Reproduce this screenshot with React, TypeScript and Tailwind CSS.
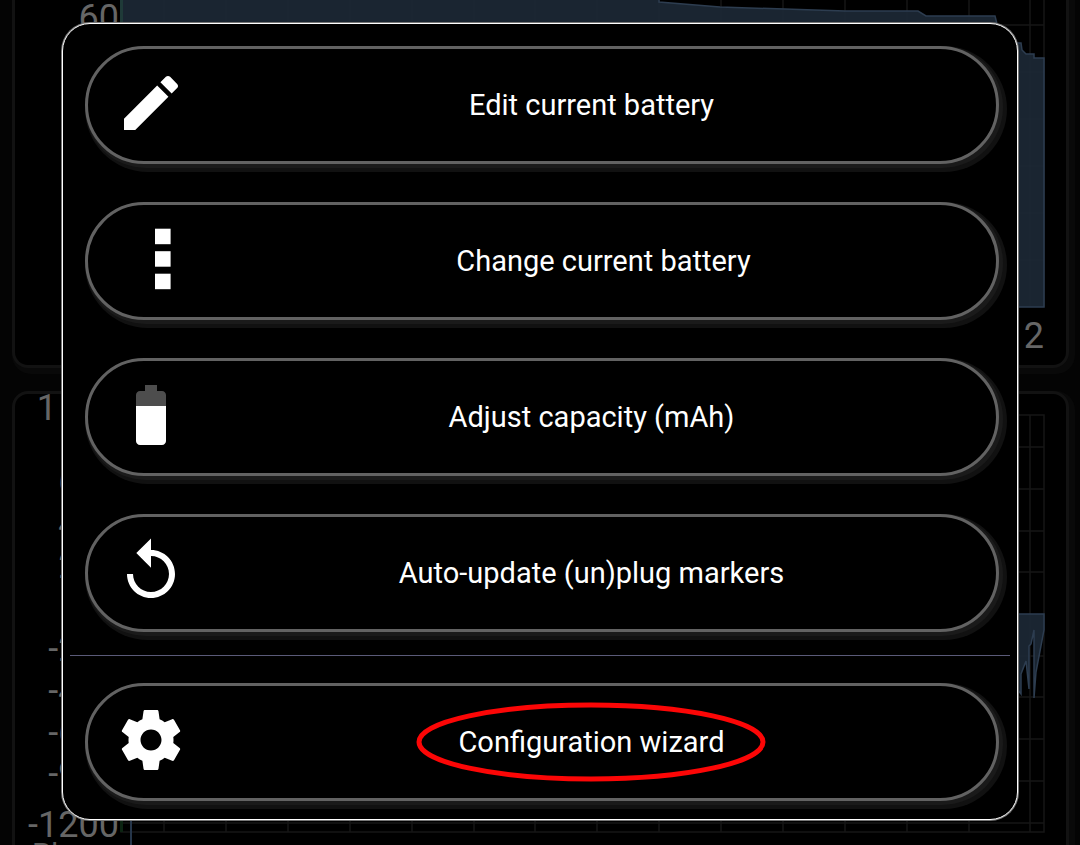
import type { ReactNode } from 'react';

type MenuItem = {
  label: string;
  icon: ReactNode;
  highlighted?: boolean;
};

const VERTICAL_LINES = [
  164, 226, 288, 350, 412, 474, 535, 597, 659, 721, 783, 845, 907, 969, 1030,
];
const LEVEL_LINES = [25, 72, 119, 166, 213, 260];
const CURRENT_LINES = [447, 489, 531, 572, 656, 697, 739, 781, 823];

const CURRENT_LABELS = [
  { text: '600', y: 494 },
  { text: '400', y: 536 },
  { text: '200', y: 578 },
  { text: '0', y: 620 },
  { text: '-200', y: 661 },
  { text: '-400', y: 703 },
  { text: '-600', y: 745 },
  { text: '-900', y: 786 },
  { text: '-1200', y: 837 },
];

function MaterialIcon({ children }: { children: ReactNode }) {
  return (
    <svg className="size-[72px] shrink-0 fill-white" viewBox="0 0 24 24" aria-hidden="true">
      {children}
    </svg>
  );
}

const editIcon = (
  <MaterialIcon>
    <path d="M3 17.25V21h3.75L17.81 9.94l-3.75-3.75L3 17.25zM20.71 7.04c.39-.39.39-1.02 0-1.41l-2.34-2.34c-.39-.39-1.02-.39-1.41 0l-1.83 1.83 3.75 3.75 1.83-1.83z" />
  </MaterialIcon>
);

const moreIcon = (
  <svg className="h-[72px] w-24 shrink-0 fill-white" viewBox="0 0 96 72" aria-hidden="true">
    <rect x="40" y="5.7" width="15.6" height="15.5" />
    <rect x="40" y="28.2" width="15.6" height="15.5" />
    <rect x="40" y="50.7" width="15.6" height="15.5" />
  </svg>
);

const batteryIcon = (
  <MaterialIcon>
    <path
      fillOpacity="0.3"
      d="M17 5.33C17 4.6 16.4 4 15.67 4H14V2h-4v2H8.33C7.6 4 7 4.6 7 5.33V9h10V5.33z"
    />
    <path d="M7 9v11.67C7 21.4 7.6 22 8.33 22h7.33c.74 0 1.34-.6 1.34-1.33V9H7z" />
  </MaterialIcon>
);

const replayIcon = (
  <MaterialIcon>
    <path d="M12 5V1.2L7.1 6l4.9 4.9V7c3.31 0 6 2.69 6 6s-2.69 6-6 6-6-2.69-6-6H4c0 4.42 3.58 8 8 8s8-3.58 8-8-3.58-8-8-8z" />
  </MaterialIcon>
);

const settingsIcon = (
  <MaterialIcon>
    <path d="M19.43 12.98c.04-.32.07-.64.07-.98s-.03-.66-.07-.98l2.11-1.65c.19-.15.24-.42.12-.64l-2-3.46c-.12-.22-.39-.3-.61-.22l-2.49 1c-.52-.4-1.08-.73-1.69-.98l-.38-2.65C14.46 2.18 14.25 2 14 2h-4c-.25 0-.46.18-.49.42l-.38 2.65c-.61.25-1.17.59-1.69.98l-2.49-1c-.23-.09-.49 0-.61.22l-2 3.46c-.13.22-.07.49.12.64l2.11 1.65c-.04.32-.07.65-.07.98s.03.66.07.98l-2.11 1.65c-.19.15-.24.42-.12.64l2 3.46c.12.22.39.3.61.22l2.49-1c.52.4 1.08.73 1.69.98l.38 2.65c.03.24.24.42.49.42h4c.25 0 .46-.18.49-.42l.38-2.65c.61-.25 1.17-.59 1.69-.98l2.49 1c.23.09.49 0 .61-.22l2-3.46c.12-.22.07-.49-.12-.64l-2.11-1.65zM12 15.5c-1.93 0-3.5-1.57-3.5-3.5s1.57-3.5 3.5-3.5 3.5 1.57 3.5 3.5-1.57 3.5-3.5 3.5z" />
  </MaterialIcon>
);

const BATTERY_ITEMS: MenuItem[] = [
  { label: 'Edit current battery', icon: editIcon },
  { label: 'Change current battery', icon: moreIcon },
  { label: 'Adjust capacity (mAh)', icon: batteryIcon },
  { label: 'Auto-update (un)plug markers', icon: replayIcon },
];

function MenuButton({ label, icon, highlighted }: MenuItem) {
  return (
    <button
      type="button"
      className="flex h-[118px] w-full items-center rounded-full border-3 border-[#626262] bg-black pl-[27px] text-white shadow-[2px_2px_0_2px_#1a1a1a,4px_4px_0_4px_#111111]"
    >
      <span className="pb-1">{icon}</span>
      <span className="flex flex-1 justify-center text-[29px] leading-9">
        <span className="relative">
          {label}
          {/* Hand-drawn style marker around the label */}
          {highlighted && (
            <svg
              className="absolute top-1/2 left-1/2 h-20 w-[350px] -translate-1/2"
              viewBox="0 0 350 80"
              aria-hidden="true"
            >
              <ellipse cx="175" cy="40" rx="172" ry="37" fill="none" stroke="#fc0606" strokeWidth="5" />
            </svg>
          )}
        </span>
      </span>
    </button>
  );
}

/** Battery level over time */
function LevelChart() {
  return (
    <svg className="block w-full" viewBox="15 0 1051 365" role="img" aria-label="Battery level">
      <g stroke="#161616" strokeWidth="1.5">
        {VERTICAL_LINES.map((x) => (
          <path key={x} d={`M${x} 0V307`} />
        ))}
        {LEVEL_LINES.map((y) => (
          <path key={y} d={`M121 ${y}H1044`} />
        ))}
        <path d="M1044 0V307" />
      </g>
      <path
        d="M121 0H659V2L720 7L845 11H918L926 16H995L997 24L1010 43H1021L1022 50L1026 54H1034V58H1044V307H121Z"
        fill="#1d2936"
        fillOpacity="0.9"
      />
      <path
        d="M659 0V2L720 7L845 11H918L926 16H995L997 24L1010 43H1021L1022 50L1026 54H1034V58H1044V307H121"
        fill="none"
        stroke="#2d3d50"
        strokeWidth="1.5"
      />
      <path d="M121.5 0V307" stroke="#1f3a38" strokeWidth="3" />
      <g fill="#666666" fontSize="36" textAnchor="end">
        <text x="119" y="30">60</text>
        <text x="1044" y="348">2</text>
      </g>
    </svg>
  );
}

/** Charge and discharge current over time */
function CurrentChart() {
  return (
    <svg className="block w-full" viewBox="15 394 1051 480" role="img" aria-label="Battery current">
      <g fill="none" stroke="#161616" strokeWidth="1.5">
        {VERTICAL_LINES.map((x) => (
          <path key={x} d={`M${x} 415V832`} />
        ))}
        {CURRENT_LINES.map((y) => (
          <path key={y} d={`M121 ${y}H1044`} />
        ))}
        <path d="M121 415H1044V832H121Z" />
      </g>
      <path
        d="M1010 614H1044V630L1036 672L1034 698V630L1031 644L1029 646V689L1026 661L1021 674V694L1018 690H1010Z"
        fill="#1d2936"
        fillOpacity="0.9"
      />
      <path
        d="M1010 614H1044V630L1036 672L1034 698V630L1031 644L1029 646V689L1026 661L1021 674V694L1018 690V614"
        fill="none"
        stroke="#2d3d50"
        strokeWidth="1.5"
      />
      <path d="M121.5 415V832" stroke="#0c2412" strokeWidth="3" />
      <path d="M131 614V874" stroke="#26364a" strokeWidth="2" />
      <g fill="#666666" fontSize="36" textAnchor="end">
        <text x="57" y="420">1</text>
        {CURRENT_LABELS.map(({ text, y }) => (
          <text key={text} x="119" y={y}>
            {text}
          </text>
        ))}
      </g>
      <text x="32" y="864" fill="#5c5c5c" fontSize="30">
        Plug
      </text>
    </svg>
  );
}

export default function App() {
  return (
    <div className="relative h-screen overflow-hidden bg-[#040404] font-['Roboto',sans-serif]">
      <main className="flex flex-col gap-[23px] pr-[11px] pl-3">
        <section className="rounded-b-2xl border-3 border-t-0 border-[#121212] bg-black shadow-[3px_3px_0_3px_#090909]">
          <LevelChart />
        </section>
        <section className="rounded-2xl border-3 border-[#121212] bg-black shadow-[3px_3px_0_3px_#090909]">
          <CurrentChart />
        </section>
      </main>

      {/* Options dialog */}
      <div className="absolute inset-0 px-[62px] pt-[23px]">
        <div
          role="dialog"
          aria-label="Battery options"
          className="rounded-[28px] border border-white bg-black pt-[22px] pb-[18px] shadow-[0_0_0_1px_#777777]"
        >
          <ul className="flex flex-col gap-[38px] pr-[18px] pl-[22px]">
            {BATTERY_ITEMS.map((item) => (
              <li key={item.label}>
                <MenuButton {...item} />
              </li>
            ))}
          </ul>
          <hr className="mx-[7px] mt-[23px] mb-[27px] border-[#5a5a78]" />
          <div className="pr-[18px] pl-[22px]">
            <MenuButton label="Configuration wizard" icon={settingsIcon} highlighted />
          </div>
        </div>
      </div>
    </div>
  );
}
